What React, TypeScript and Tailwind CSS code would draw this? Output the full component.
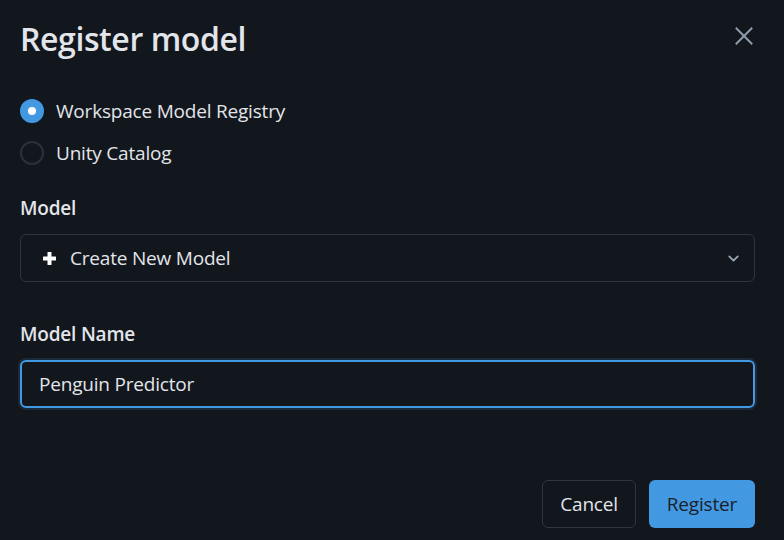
import React, { useState } from 'react';
import { ChevronDown } from 'lucide-react';

const options = [
  { id: 'workspace', label: 'Workspace Model Registry' },
  { id: 'unity', label: 'Unity Catalog' },
];

function CloseIcon() {
  return (
    <svg width="18" height="18" viewBox="0 0 18 18" fill="none" stroke="currentColor" strokeWidth="2" strokeLinecap="square">
      <path d="M1.5 1.5l15 15M16.5 1.5l-15 15" />
    </svg>
  );
}

function PlusIcon() {
  return (
    <svg width="13" height="13" viewBox="0 0 13 13" fill="currentColor">
      <rect x="4.5" y="0" width="4" height="13" rx="0.5" />
      <rect x="0" y="4.5" width="13" height="4" rx="0.5" />
    </svg>
  );
}

export default function App() {
  const [registry, setRegistry] = useState('workspace');
  const [name, setName] = useState('Penguin Predictor');

  return (
    <div
      className="w-[784px] h-[540px] bg-[#12161d] text-[#e2e5ea] pl-5 pr-[29px] pt-[18px] overflow-hidden"
      style={{ fontFamily: '"Open Sans", "Noto Sans", sans-serif' }}
    >
      <div className="flex items-center justify-between h-[42px]">
        <h2 className="text-[32px] font-semibold tracking-[-0.4px] leading-none text-[#e2e5ea]">Register model</h2>
        <button className="text-[#8e9caa] mr-[2px] mb-[6px]">
          <CloseIcon />
        </button>
      </div>

      <div className="mt-[39px] flex flex-col gap-[18px]">
        {options.map((o) => (
          <label key={o.id} className="flex items-center gap-[12px] cursor-pointer h-[24px]" onClick={() => setRegistry(o.id)}>
            <span
              className={`w-[24px] h-[24px] rounded-full flex items-center justify-center ${
                registry === o.id ? 'bg-[#4299e1]' : 'border-2 border-[#2a333d]'
              }`}
            >
              {registry === o.id && <span className="w-[8px] h-[8px] rounded-full bg-white" />}
            </span>
            <span className="text-[19px] tracking-[-0.2px] text-[#e2e5ea]">{o.label}</span>
          </label>
        ))}
      </div>

      <div className="mt-[30px]">
        <div className="text-[19px] font-semibold tracking-[-0.2px] h-[26px] leading-[26px]">Model</div>
        <button className="mt-[13px] w-full h-[48px] rounded-[6px] border border-[#2e3741] flex items-center justify-between pl-[22px] pr-[12px]">
          <span className="flex items-center gap-[14px] text-[19px] tracking-[-0.2px]">
            <span className="text-white">
              <PlusIcon />
            </span>
            Create New Model
          </span>
          <ChevronDown size={17} strokeWidth={2.5} className="text-[#9aa8b6]" />
        </button>
      </div>

      <div className="mt-[39px]">
        <div className="text-[19px] font-semibold tracking-[-0.2px] h-[26px] leading-[26px]">Model Name</div>
        <input
          value={name}
          onChange={(e) => setName(e.target.value)}
          className="mt-[13px] w-full h-[48px] rounded-[6px] border-2 border-[#4299e1] ring-2 ring-[#1b2a3b] bg-transparent px-[17px] text-[19px] tracking-[-0.2px] text-[#e2e5ea] outline-none"
        />
      </div>

      <div className="mt-[72px] flex justify-end gap-[13px]">
        <button className="h-[48px] px-[17px] rounded-[6px] border border-[#2e3741] text-[19px] tracking-[-0.2px] text-[#e2e5ea]">
          Cancel
        </button>
        <button className="h-[48px] px-[18px] rounded-[6px] bg-[#4299e1] text-[19px] tracking-[-0.2px] text-[#1a202c]">
          Register
        </button>
      </div>
    </div>
  );
}
